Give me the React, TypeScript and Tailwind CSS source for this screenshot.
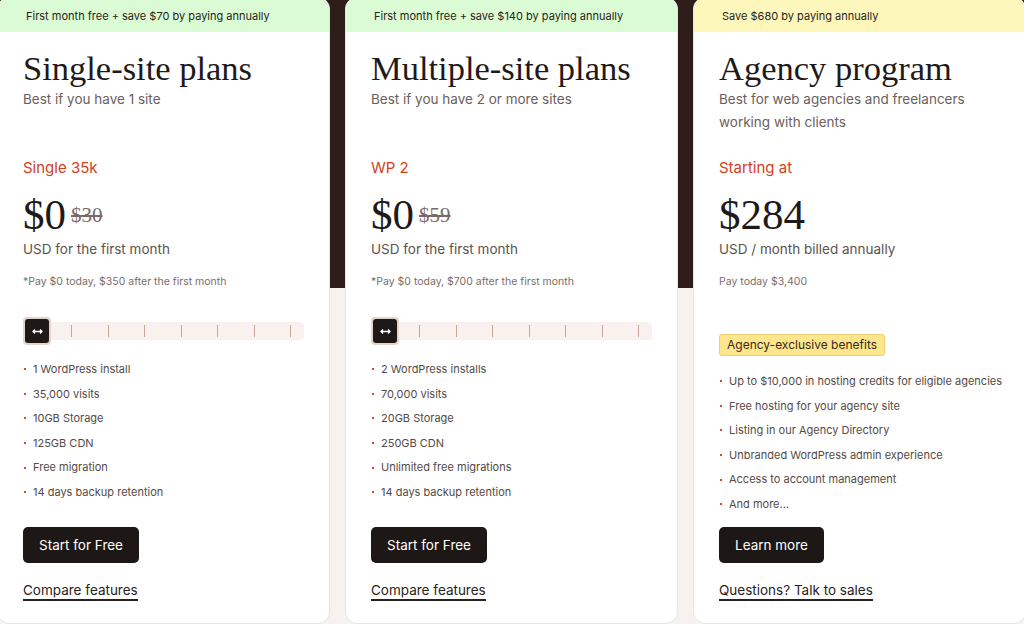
import React from "react";

const sans = { fontFamily: "Inter, 'Noto Sans', sans-serif" };
const serif = { fontFamily: "'Liberation Serif', 'DejaVu Serif', serif" };

function Bullets({ items }: { items: string[] }) {
  return (
    <ul className="flex flex-col">
      {items.map((t) => (
        <li key={t} className="flex items-center h-[24.6px] text-[11px] text-[#554a46] whitespace-nowrap">
          <span className="shrink-0 w-[2px] h-[2px] bg-[#d9482a] ml-[1px] mr-[7px]" />
          {t}
        </li>
      ))}
    </ul>
  );
}

function Slider() {
  return (
    <div className="relative h-[28px] flex items-center">
      <div className="w-full h-[18px] rounded-[4px] bg-[#f8f1ed] flex items-center justify-between pl-[48px] pr-[13px]">
        {Array.from({ length: 7 }).map((_, i) => (
          <span key={i} className="w-[1px] h-[12px] bg-[#c9a69c]" />
        ))}
      </div>
      <div className="absolute left-0 top-0 w-[28px] h-[28px] rounded-[4px] bg-[#e3d5cd] p-[2px]">
        <div className="w-full h-full rounded-[3px] bg-[#1e1816] flex items-center justify-center">
          <svg width="11" height="7" viewBox="0 0 11 7" fill="none" stroke="#fff" strokeWidth="1.3">
            <path d="M1 3.5h9M3 1.5L1 3.5l2 2M8 1.5l2 2-2 2" />
          </svg>
        </div>
      </div>
    </div>
  );
}

type Card = {
  banner: string;
  bannerBg: string;
  title: string;
  subtitle: string[];
  plan: string;
  price: string;
  strike?: string;
  usd: string;
  note: string;
  slider: boolean;
  features: string[];
  button: string;
  link: string;
};

const cards: Card[] = [
  {
    banner: "First month free + save $70 by paying annually",
    bannerBg: "bg-[#dbfbd4]",
    title: "Single-site plans",
    subtitle: ["Best if you have 1 site"],
    plan: "Single 35k",
    price: "$0",
    strike: "$30",
    usd: "USD for the first month",
    note: "*Pay $0 today, $350 after the first month",
    slider: true,
    features: [
      "1 WordPress install",
      "35,000 visits",
      "10GB Storage",
      "125GB CDN",
      "Free migration",
      "14 days backup retention",
    ],
    button: "Start for Free",
    link: "Compare features",
  },
  {
    banner: "First month free + save $140 by paying annually",
    bannerBg: "bg-[#dbfbd4]",
    title: "Multiple-site plans",
    subtitle: ["Best if you have 2 or more sites"],
    plan: "WP 2",
    price: "$0",
    strike: "$59",
    usd: "USD for the first month",
    note: "*Pay $0 today, $700 after the first month",
    slider: true,
    features: [
      "2 WordPress installs",
      "70,000 visits",
      "20GB Storage",
      "250GB CDN",
      "Unlimited free migrations",
      "14 days backup retention",
    ],
    button: "Start for Free",
    link: "Compare features",
  },
  {
    banner: "Save $680 by paying annually",
    bannerBg: "bg-[#fdf7bb]",
    title: "Agency program",
    subtitle: ["Best for web agencies and freelancers", "working with clients"],
    plan: "Starting at",
    price: "$284",
    usd: "USD / month billed annually",
    note: "Pay today $3,400",
    slider: false,
    features: [
      "Up to $10,000 in hosting credits for eligible agencies",
      "Free hosting for your agency site",
      "Listing in our Agency Directory",
      "Unbranded WordPress admin experience",
      "Access to account management",
      "And more...",
    ],
    button: "Learn more",
    link: "Questions? Talk to sales",
  },
];

function PlanCard({ c }: { c: Card }) {
  return (
    <div className="w-[333px] shrink-0 h-[627px] rounded-[12px] bg-white border border-[#ebe3de] overflow-hidden flex flex-col">
      <div className={`${c.bannerBg} h-[34px] pt-[3px] pl-[28px] pr-[10px] flex items-center text-[11px] text-[#2a2320]`}>
        {c.banner}
      </div>
      <div className="px-[25px] flex-1 flex flex-col">
        <div className="h-[125px] pt-[16px]">
          <div style={serif} className="text-[34.5px] leading-[40px] text-[#1f1a19]">
            {c.title}
          </div>
          {c.subtitle.map((s) => (
            <div key={s} className="text-[13.5px] leading-[23px] text-[#6b605c]">
              {s}
            </div>
          ))}
        </div>
        <div className="text-[15px] leading-[22px] text-[#d2401c]">{c.plan}</div>
        <div className="mt-[12px] flex items-center h-[48px]">
          <span style={serif} className="text-[43px] leading-[48px] text-[#1f1a19]">
            {c.price}
          </span>
          {c.strike && (
            <span style={serif} className="ml-[5px] text-[21px] leading-[24px] text-[#7a6862] line-through">
              {c.strike}
            </span>
          )}
        </div>
        <div className="-mt-[1px] text-[13.5px] leading-[22px] text-[#5c524e]">{c.usd}</div>
        <div className="mt-[14px] text-[10.5px] leading-[16px] text-[#7a6e6a]">{c.note}</div>
        {c.slider ? (
          <>
            <div className="mt-[27px]">
              <Slider />
            </div>
            <div className="mt-[12px]">
              <Bullets items={c.features} />
            </div>
          </>
        ) : (
          <>
            <div className="mt-[44px] flex">
              <span className="h-[22px] px-[7px] flex items-center rounded-[3px] bg-[#fde68b] border border-[#f2cf6e] text-[12px] text-[#3a2a22]">
                Agency-exclusive benefits
              </span>
            </div>
            <div className="mt-[13px]">
              <Bullets items={c.features} />
            </div>
          </>
        )}
        <div className="mt-auto pb-[22px]">
          <button className="h-[36px] px-[16px] rounded-[5px] bg-[#1d1716] text-white text-[13.5px]">
            {c.button}
          </button>
          <div className="mt-[14px]">
            <span className="text-[13.5px] leading-[20px] text-[#2a2220] border-b-2 border-[#2a2220] pb-[1px]">
              {c.link}
            </span>
          </div>
        </div>
      </div>
    </div>
  );
}

export default function App() {
  return (
    <div style={sans} className="w-[1024px] h-[626px] bg-white overflow-hidden">
      <div className="h-[624px] bg-[linear-gradient(to_bottom,#2f1d1b_0px,#2f1d1b_288px,#f7f2ee_288px)] overflow-hidden">
        <div className="flex gap-[15px] -ml-[3px] -mt-[3px]">
          {cards.map((c) => (
            <PlanCard key={c.title} c={c} />
          ))}
        </div>
      </div>
    </div>
  );
}
